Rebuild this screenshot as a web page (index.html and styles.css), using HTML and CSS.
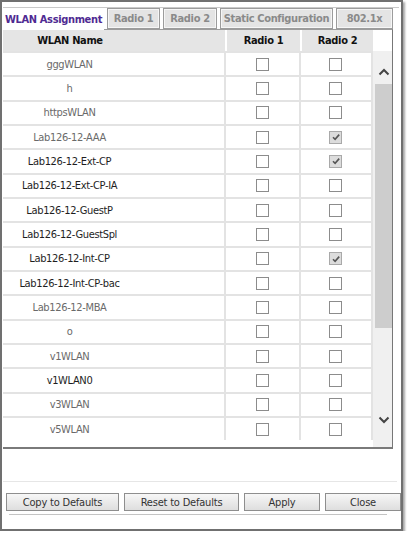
FILE: index.html
```html
<!DOCTYPE html>
<html>
<head>
<meta charset="utf-8">
<link rel="stylesheet" href="styles.css">
</head>
<body>
<div class="window">
  <div class="topline"></div>
  <div class="tabs">
    <div class="tab active">WLAN Assignment</div>
    <div class="tab t-r1">Radio 1</div>
    <div class="tab t-r2">Radio 2</div>
    <div class="tab t-sc">Static Configuration</div>
    <div class="tab t-dx">802.1x</div>
  </div>
  <div class="panel">
    <div class="thead">
      <div class="h-name">WLAN Name</div>
      <div class="h-r">Radio 1</div>
      <div class="h-r">Radio 2</div>
      <div class="h-sb"></div>
    </div>
    <div class="tbody">
      <div class="rows">
        <div class="row"><div class="c-name dim">gggWLAN</div><div class="c-r"><span class="cb"></span></div><div class="c-r"><span class="cb"></span></div></div>
        <div class="row"><div class="c-name dim">h</div><div class="c-r"><span class="cb"></span></div><div class="c-r"><span class="cb"></span></div></div>
        <div class="row"><div class="c-name dim">httpsWLAN</div><div class="c-r"><span class="cb"></span></div><div class="c-r"><span class="cb"></span></div></div>
        <div class="row"><div class="c-name dim">Lab126-12-AAA</div><div class="c-r"><span class="cb"></span></div><div class="c-r"><span class="cb on"><svg viewBox="0 0 10 10" width="10" height="10"><path d="M2 5.2 L4.1 7.3 L8.2 2.6" fill="none" stroke="#555" stroke-width="1.6"/></svg></span></div></div>
        <div class="row"><div class="c-name">Lab126-12-Ext-CP</div><div class="c-r"><span class="cb"></span></div><div class="c-r"><span class="cb on"><svg viewBox="0 0 10 10" width="10" height="10"><path d="M2 5.2 L4.1 7.3 L8.2 2.6" fill="none" stroke="#555" stroke-width="1.6"/></svg></span></div></div>
        <div class="row"><div class="c-name">Lab126-12-Ext-CP-IA</div><div class="c-r"><span class="cb"></span></div><div class="c-r"><span class="cb"></span></div></div>
        <div class="row"><div class="c-name">Lab126-12-GuestP</div><div class="c-r"><span class="cb"></span></div><div class="c-r"><span class="cb"></span></div></div>
        <div class="row"><div class="c-name">Lab126-12-GuestSpl</div><div class="c-r"><span class="cb"></span></div><div class="c-r"><span class="cb"></span></div></div>
        <div class="row"><div class="c-name">Lab126-12-Int-CP</div><div class="c-r"><span class="cb"></span></div><div class="c-r"><span class="cb on"><svg viewBox="0 0 10 10" width="10" height="10"><path d="M2 5.2 L4.1 7.3 L8.2 2.6" fill="none" stroke="#555" stroke-width="1.6"/></svg></span></div></div>
        <div class="row"><div class="c-name">Lab126-12-Int-CP-bac</div><div class="c-r"><span class="cb"></span></div><div class="c-r"><span class="cb"></span></div></div>
        <div class="row"><div class="c-name dim">Lab126-12-MBA</div><div class="c-r"><span class="cb"></span></div><div class="c-r"><span class="cb"></span></div></div>
        <div class="row"><div class="c-name dim">o</div><div class="c-r"><span class="cb"></span></div><div class="c-r"><span class="cb"></span></div></div>
        <div class="row"><div class="c-name dim">v1WLAN</div><div class="c-r"><span class="cb"></span></div><div class="c-r"><span class="cb"></span></div></div>
        <div class="row"><div class="c-name">v1WLAN0</div><div class="c-r"><span class="cb"></span></div><div class="c-r"><span class="cb"></span></div></div>
        <div class="row"><div class="c-name dim">v3WLAN</div><div class="c-r"><span class="cb"></span></div><div class="c-r"><span class="cb"></span></div></div>
        <div class="row"><div class="c-name dim">v5WLAN</div><div class="c-r"><span class="cb"></span></div><div class="c-r"><span class="cb"></span></div></div>
      </div>
      <div class="scrollbar">
        <div class="sb-btn sb-up"><svg viewBox="0 0 12 8" width="12" height="8"><path d="M1.5 6.5 L6 2 L10.5 6.5" fill="none" stroke="#444" stroke-width="2"/></svg></div>
        <div class="sb-track"><div class="sb-thumb"></div></div>
        <div class="sb-btn sb-down"><svg viewBox="0 0 12 8" width="12" height="8"><path d="M1.5 1.5 L6 6 L10.5 1.5" fill="none" stroke="#444" stroke-width="2"/></svg></div>
      </div>
    </div>
  </div>
  <div class="footer">
    <div class="sep"></div>
    <div class="buttons">
      <button class="btn b-copy">Copy to Defaults</button>
      <button class="btn b-reset">Reset to Defaults</button>
      <button class="btn b-apply">Apply</button>
      <button class="btn b-close">Close</button>
    </div>
    <div class="underline"></div>
  </div>
</div>
</body>
</html>
```

FILE: styles.css
```css
html, body {
  margin: 0;
  padding: 0;
  background: #ffffff;
}
body {
  font-family: "DejaVu Sans Condensed", "DejaVu Sans", sans-serif;
  font-stretch: condensed;
  font-size: 11px;
  letter-spacing: -0.35px;
  color: #222;
}
.window {
  box-sizing: border-box;
  width: 403px;
  height: 531px;
  border: 2px solid #707070;
  box-shadow: 2px 2px 2px rgba(0, 0, 0, 0.35);
  background: #fff;
  padding: 5px 0 0 1px;
  display: flex;
  flex-direction: column;
}
.topline {
  height: 1px;
  background: #c9c9c9;
  margin-right: 2px;
}
.tabs {
  display: flex;
  gap: 3px;
  height: 21px;
}
.tab {
  box-sizing: border-box;
  height: 21px;
  border: 1px solid #9c9c9c;
  box-shadow: inset 0 0 0 1px #f6f6f6;
  background: #e4e4e4;
  color: #8a8a8a;
  font-weight: bold;
  white-space: nowrap;
  display: flex;
  align-items: center;
  justify-content: center;
}
.tab.active {
  width: 101px;
  background: #fff;
  border-color: #fff;
  box-shadow: none;
  color: #4f2a92;
  height: 22px;
  position: relative;
  z-index: 1;
}
.t-r1 { width: 53px; }
.t-r2 { width: 54px; }
.t-sc { width: 113px; }
.t-dx { width: 57px; }

.panel {
  box-sizing: border-box;
  width: 390px;
  height: 420px;
  border-top: 1px solid #9c9c9c;
  border-right: 1px solid #777;
  border-bottom: 2px solid #7a7a7a;
  display: flex;
  flex-direction: column;
}
.thead {
  display: flex;
  height: 21px;
  font-weight: bold;
  color: #111;
}
.h-name, .h-r {
  background: #e5e5e5;
  display: flex;
  align-items: center;
  justify-content: center;
}
.h-name {
  width: 222px;
  padding-right: 88px;
  box-sizing: border-box;
}
.h-r {
  border-left: 2px solid #fff;
}
.h-r:nth-child(2) { width: 73px; }
.h-r:nth-child(3) { width: 71px; }
.h-sb { width: 19px; }

.tbody {
  flex: 1;
  display: flex;
  overflow: hidden;
}
.rows {
  width: 370px;
  display: flex;
  flex-direction: column;
}
.row {
  box-sizing: border-box;
  height: 24.33px;
  flex: none;
  display: flex;
  border-top: 2px solid #e3e3e3;
}
.c-name {
  width: 222px;
  box-sizing: border-box;
  padding-right: 88px;
  white-space: nowrap;
  display: flex;
  align-items: center;
  justify-content: center;
  color: #1e1e1e;
}
.c-name.dim {
  color: #6a6a6a;
}
.c-r {
  border-left: 2px solid #e3e3e3;
  display: flex;
  align-items: center;
  justify-content: center;
}
.row .c-r:nth-child(2) { width: 73px; }
.row .c-r:nth-child(3) { width: 71px; border-right: 2px solid #e3e3e3; }
.cb {
  box-sizing: border-box;
  width: 13px;
  height: 13px;
  border: 1px solid #8c8c8c;
  background: #fff;
  display: flex;
  align-items: center;
  justify-content: center;
}
.cb.on {
  background: #dcdcdc;
  border-color: #a9a9a9;
}

.scrollbar {
  width: 19px;
  background: #f0f0f0;
  display: flex;
  flex-direction: column;
  padding-left: 2px;
  box-sizing: border-box;
}
.sb-btn {
  height: 33px;
  display: flex;
  justify-content: center;
}
.sb-up {
  align-items: flex-end;
  padding-bottom: 8px;
  box-sizing: border-box;
}
.sb-down {
  align-items: flex-start;
  padding-top: 2px;
  box-sizing: border-box;
}
.sb-track {
  flex: 1;
}
.sb-thumb {
  height: 244px;
  background: #cdcdcd;
}

.footer {
  flex: 1;
  display: flex;
  flex-direction: column;
}
.sep {
  height: 1px;
  background: #e6e6e6;
  margin: 32px 4px 0 0;
}
.buttons {
  display: flex;
  margin-top: 11px;
  padding-left: 3px;
}
.btn {
  box-sizing: border-box;
  height: 18px;
  border: 1px solid #8e8e8e;
  background: linear-gradient(#f7f7f7, #dedede);
  font-family: "DejaVu Sans Condensed", "DejaVu Sans", sans-serif;
  font-stretch: condensed;
  font-size: 11px;
  letter-spacing: -0.2px;
  color: #333;
  padding: 0;
  margin: 0;
}
.b-copy { width: 113px; }
.b-reset { width: 115px; margin-left: 5px; }
.b-apply { width: 76px; margin-left: 5px; }
.b-close { width: 76px; margin-left: 5px; }
.underline {
  height: 1px;
  background: #c4c4c4;
  margin: 3px 14px 0 6px;
}
```
